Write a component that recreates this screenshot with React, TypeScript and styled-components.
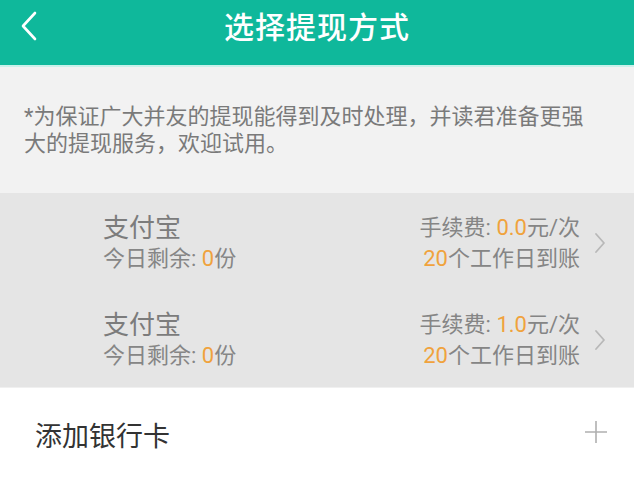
import React from 'react'
import styled, { createGlobalStyle } from 'styled-components'

const GlobalStyle = createGlobalStyle`
  html, body {
    margin: 0;
    padding: 0;
    background: #ffffff;
  }
  body {
    font-family: Roboto, "Noto Sans CJK SC", "Noto Sans", sans-serif;
  }
`

const Page = styled.div`
  width: 634px;
  height: 478px;
  overflow: hidden;
  display: flex;
  flex-direction: column;
  background: #ffffff;
`

const Header = styled.header`
  height: 65px;
  flex-shrink: 0;
  position: relative;
  display: flex;
  align-items: center;
  justify-content: center;
  background-color: #0fb89b;
  border-bottom: 2px solid #c9f1ea;
  box-sizing: content-box;
`

const BackButton = styled.div`
  position: absolute;
  left: 20px;
  top: 10px;
  width: 22px;
  height: 32px;
  display: flex;
  align-items: center;
`

const Title = styled.h1`
  margin: -16px 0 0;
  font-size: 30px;
  font-weight: 500;
  color: #ffffff;
  letter-spacing: 1px;
`

const Notice = styled.div`
  padding: 36px 40px 29px 24px;
  background-color: #f2f2f2;
  font-size: 22px;
  line-height: 27px;
  color: #7a7a7a;
  height: 61px;
`

const MethodList = styled.div`
  background-color: #e5e5e5;
  display: flex;
  flex-direction: column;
`

const MethodRow = styled.div`
  height: 97px;
  display: flex;
  align-items: center;
  padding: 3px 28px 0 103px;
  box-sizing: border-box;
`

const MethodInfo = styled.div`
  flex: 1;
  display: flex;
  flex-direction: column;
`

const MethodName = styled.div`
  font-size: 26px;
  line-height: 32px;
  color: #7c7c7c;
`

const SubLine = styled.div`
  font-size: 22px;
  line-height: 30px;
  color: #868686;
`

const FeeInfo = styled.div`
  display: flex;
  flex-direction: column;
  align-items: flex-end;
`

const FeeLine = styled.div`
  font-size: 22px;
  line-height: 31px;
  color: #858585;
`

const Highlight = styled.span`
  color: #f0a23c;
`

const Chevron = styled.div`
  width: 12px;
  margin-left: 14px;
  display: flex;
  align-items: center;
`

const AddRow = styled.div`
  height: 92px;
  display: flex;
  align-items: center;
  justify-content: space-between;
  padding: 4px 26px 0 35px;
  box-sizing: border-box;
  border-top: 1px solid #f0f0f0;
`

const AddLabel = styled.div`
  font-size: 27px;
  color: #333333;
`

const PlusIcon = styled.svg`
  margin-top: -6px;
`

const methods = [
  { name: '支付宝', left: '0', fee: '0.0', days: '20' },
  { name: '支付宝', left: '0', fee: '1.0', days: '20' },
]

export default function App() {
  return (
    <Page>
      <GlobalStyle />
      <Header>
        <BackButton>
          <svg width="18" height="30" viewBox="0 0 18 30" fill="none">
            <path d="M15 2 L3 15 L15 28" stroke="#ffffff" strokeWidth="2.6" strokeLinecap="round" strokeLinejoin="round" />
          </svg>
        </BackButton>
        <Title>选择提现方式</Title>
      </Header>
      <Notice>*为保证广大并友的提现能得到及时处理，并读君准备更强大的提现服务，欢迎试用。</Notice>
      <MethodList>
        {methods.map((m, i) => (
          <MethodRow key={i}>
            <MethodInfo>
              <MethodName>{m.name}</MethodName>
              <SubLine>
                今日剩余: <Highlight>{m.left}</Highlight>份
              </SubLine>
            </MethodInfo>
            <FeeInfo>
              <FeeLine>
                手续费: <Highlight>{m.fee}</Highlight>元/次
              </FeeLine>
              <FeeLine>
                <Highlight>{m.days}</Highlight>个工作日到账
              </FeeLine>
            </FeeInfo>
            <Chevron>
              <svg width="12" height="22" viewBox="0 0 12 22" fill="none">
                <path d="M2 2 L10 11 L2 20" stroke="#b8b8b8" strokeWidth="1.8" strokeLinecap="round" strokeLinejoin="round" />
              </svg>
            </Chevron>
          </MethodRow>
        ))}
      </MethodList>
      <AddRow>
        <AddLabel>添加银行卡</AddLabel>
        <PlusIcon width="24" height="24" viewBox="0 0 24 24" fill="none">
          <path d="M12 1 V23 M1 12 H23" stroke="#b0b0b0" strokeWidth="1.6" />
        </PlusIcon>
      </AddRow>
    </Page>
  )
}
